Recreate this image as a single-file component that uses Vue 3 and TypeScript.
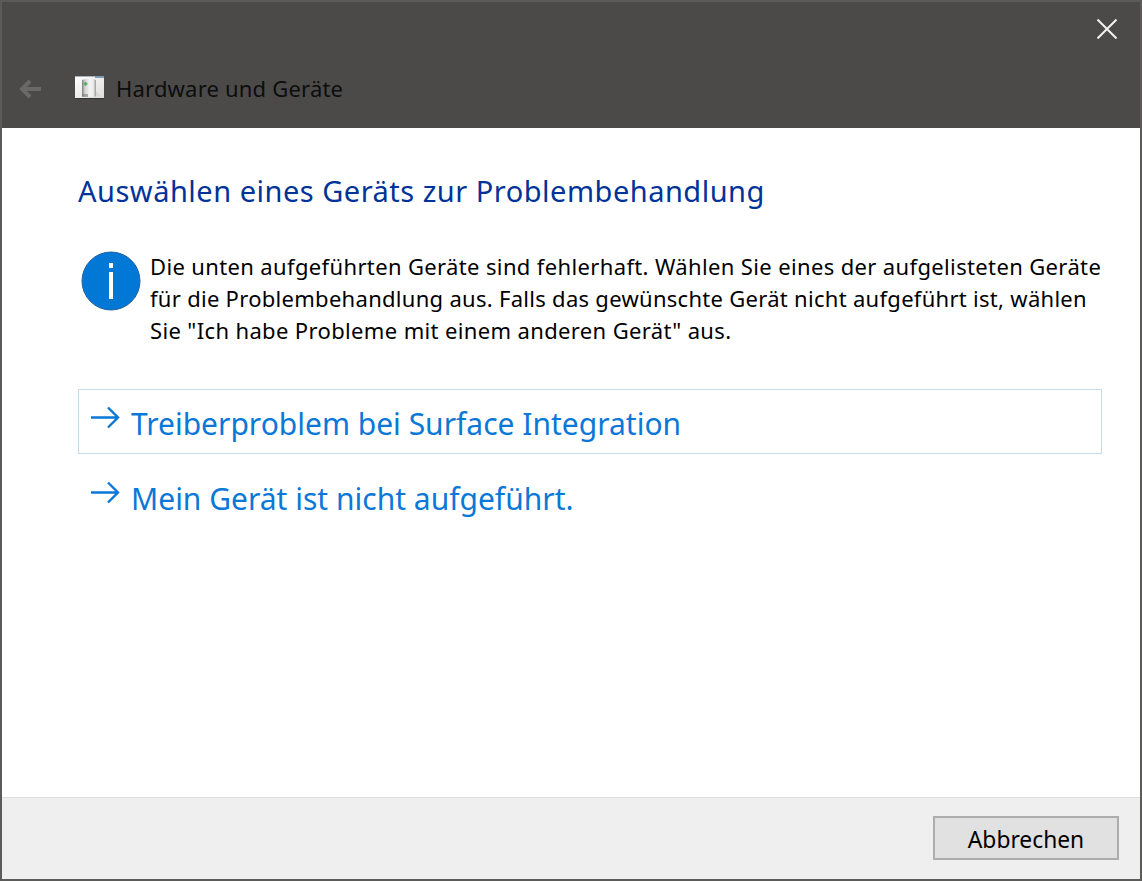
<script setup lang="ts">
const lines: string[] = [
  'Die unten aufgeführten Geräte sind fehlerhaft. Wählen Sie eines der aufgelisteten Geräte',
  'für die Problembehandlung aus. Falls das gewünschte Gerät nicht aufgeführt ist, wählen',
  'Sie "Ich habe Probleme mit einem anderen Gerät" aus.',
]
const options: { label: string; focused: boolean }[] = [
  { label: 'Treiberproblem bei Surface Integration', focused: true },
  { label: 'Mein Gerät ist nicht aufgeführt.', focused: false },
]
</script>

<template>
  <div class="window">
    <header class="titlebar">
      <div class="close-row">
        <svg class="close" width="20" height="20" viewBox="0 0 20 20">
          <path d="M0.5 0.5 L19.5 19.5 M19.5 0.5 L0.5 19.5" stroke="#f2f2f2" stroke-width="2" fill="none" />
        </svg>
      </div>
      <div class="nav-row">
        <svg class="back" width="24" height="22" viewBox="0 0 24 22">
          <path d="M23 11 H4 M12 3 L4 11 L12 19" stroke="#696967" stroke-width="4" fill="none" />
        </svg>
        <svg class="app-icon" width="29" height="23" viewBox="0 0 29 23">
          <defs>
            <linearGradient id="bg" x1="0" y1="0" x2="1" y2="1">
              <stop offset="0" stop-color="#ffffff" />
              <stop offset="1" stop-color="#dcdcda" />
            </linearGradient>
            <linearGradient id="dev" x1="0" y1="0" x2="1" y2="0">
              <stop offset="0" stop-color="#7d7f7d" />
              <stop offset="0.2" stop-color="#cfd0cf" />
              <stop offset="0.55" stop-color="#f4f4f4" />
              <stop offset="0.8" stop-color="#ececec" />
              <stop offset="1" stop-color="#9a9b99" />
            </linearGradient>
          </defs>
          <rect x="0" y="0" width="29" height="22" fill="url(#bg)" />
          <rect x="0" y="0" width="29" height="1" fill="#a8b3bf" />
          <rect x="20" y="0" width="9" height="2" fill="#7f9ab5" />
          <rect x="0" y="22" width="29" height="1" fill="#333" />
          <path d="M7 4 Q14 1.5 21 4 V20.5 H7 Z" fill="url(#dev)" />
          <path d="M7 18 H13 V21 H7 Z" fill="#777" opacity="0.55" />
          <path d="M21 15 L26 20.5 H14 L21 20.5 Z" fill="#d5d5d2" />
          <rect x="8.5" y="7" width="4" height="1.6" fill="#59ad5a" />
          <rect x="9.7" y="5.8" width="1.6" height="4" fill="#59ad5a" />
        </svg>
        <span class="crumb">Hardware und Geräte</span>
      </div>
    </header>

    <main class="content">
      <h1 class="heading">Auswählen eines Geräts zur Problembehandlung</h1>
      <div class="info">
        <svg class="info-icon" width="60" height="60" viewBox="0 0 60 60">
          <circle cx="30" cy="30" r="29" fill="#0178d6" stroke="#1f5f9e" stroke-width="1" />
          <rect x="28" y="12" width="4" height="5" fill="#fff" />
          <rect x="28" y="21" width="4" height="27" fill="#fff" />
        </svg>
        <p class="info-text">
          <span v-for="l in lines" :key="l" class="line">{{ l }}</span>
        </p>
      </div>
      <div class="options">
        <div v-for="o in options" :key="o.label" class="option" :class="{ focused: o.focused }">
          <svg class="arrow" width="29" height="23" viewBox="0 0 29 23">
            <path d="M0 11.5 H27 M17 1.5 L27 11.5 L17 21.5" stroke="#0a78d7" stroke-width="2.4" fill="none" />
          </svg>
          <span class="option-label">{{ o.label }}</span>
        </div>
      </div>
    </main>

    <footer class="footer">
      <button class="cancel" type="button"><span class="cancel-label">Abbrechen</span></button>
    </footer>
  </div>
</template>

<style>
html, body { margin: 0; padding: 0; background: #fff; }
</style>

<style scoped>
.window {
  width: 1142px;
  height: 881px;
  box-sizing: border-box;
  border: 2px solid #5b5b5a;
  display: flex;
  flex-direction: column;
  font-family: "Noto Sans", "Open Sans", sans-serif;
  background: #fff;
  overflow: hidden;
}
.titlebar {
  height: 126px;
  background: #4c4a48;
  display: flex;
  flex-direction: column;
  flex: none;
}
.close-row {
  display: flex;
  justify-content: flex-end;
  padding: 17px 23px 0 0;
  height: 37px;
}
.nav-row {
  display: flex;
  align-items: center;
  padding-left: 16px;
  margin-top: 20px;
  height: 26px;
}
.app-icon { margin-left: 33px; margin-top: -3px; }
.crumb {
  margin-left: 12px;
  margin-top: -2px;
  font-size: 22px;
  letter-spacing: 0.2px;
  color: #0d0d0d;
  white-space: nowrap;
}
.content {
  flex: 1;
  padding: 44px 38px 0 76px;
}
.heading {
  margin: 0;
  font-size: 29px;
  letter-spacing: 0.5px;
  font-weight: 400;
  line-height: 38px;
  color: #003399;
  white-space: nowrap;
}
.info {
  display: flex;
  margin-top: 41px;
  align-items: flex-start;
}
.info-icon { flex: none; margin: 0 9px 0 3px; width: 60px; height: 60px; }
.info-text {
  margin: -1px 0 0;
  font-size: 22px;
  letter-spacing: 0.36px;
  line-height: 32px;
  color: #000;
}
.line { display: block; white-space: nowrap; }
.line:nth-child(2) { letter-spacing: 0.29px; }
.options { margin-top: 43px; display: flex; flex-direction: column; gap: 10px; }
.option {
  height: 65px;
  box-sizing: border-box;
  display: flex;
  align-items: center;
  padding-left: 12px;
  border: 1px solid transparent;
}
.option.focused { border-color: #c5dcec; }
.arrow { flex: none; margin-top: -8px; }
.option-label {
  margin-left: 11px;
  margin-top: 3px;
  font-size: 30px;
  color: #0a78d7;
  white-space: nowrap;
}
.footer {
  flex: none;
  background: #efefef;
  border-top: 1px solid #dedede;
  display: flex;
  justify-content: flex-end;
  padding-top: 18px;
  height: 63px;
  padding-right: 21px;
}
.cancel {
  width: 186px;
  height: 44px;
  box-sizing: border-box;
  background: #e1e1e1;
  border: 2px solid #adadad;
  font-family: inherit;
  font-size: 22.8px;
  color: #000;
  padding: 2px 0 0;
}
</style>
